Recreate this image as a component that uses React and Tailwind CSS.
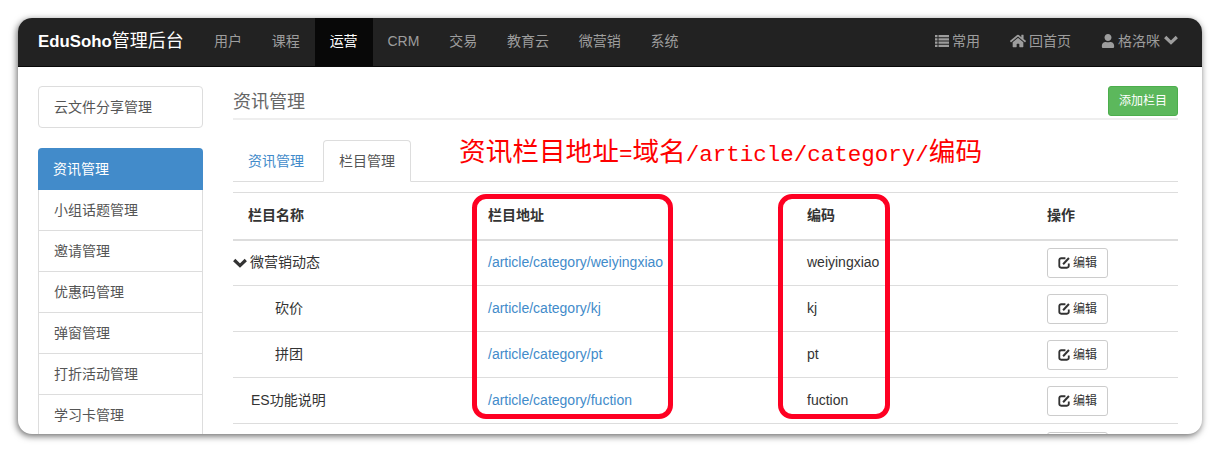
import { FaHome, FaUser } from 'react-icons/fa';

const topLinks = ['用户', '课程', '运营', 'CRM', '交易', '教育云', '微营销', '系统'];
const sideLinks = ['小组话题管理', '邀请管理', '优惠码管理', '弹窗管理', '打折活动管理', '学习卡管理'];
const rows = [
  { name: '微营销动态', path: 'weiyingxiao', code: 'weiyingxiao', open: true },
  { name: '砍价', path: 'kj', code: 'kj', child: true },
  { name: '拼团', path: 'pt', code: 'pt', child: true },
  { name: 'ES功能说明', path: 'fuction', code: 'fuction' },
];

function Chevron({ className }) {
  return (
    <svg viewBox="0 0 14 10" className={className} fill="none" stroke="currentColor" strokeWidth="3.2">
      <path d="M1.2 2 L7 7.6 L12.8 2" />
    </svg>
  );
}

function ListIcon() {
  return (
    <svg viewBox="0 0 14 12" className="w-[14px] h-[12px]" fill="currentColor">
      <path d="M0 0h2.5v2.2H0zM3.5 0H14v2.2H3.5zM0 3.3h2.5v2.2H0zM3.5 3.3H14v2.2H3.5zM0 6.6h2.5v2.2H0zM3.5 6.6H14v2.2H3.5zM0 9.8h2.5V12H0zM3.5 9.8H14V12H3.5z" />
    </svg>
  );
}

function EditIcon() {
  return (
    <svg viewBox="0 0 14 14" className="w-[13px] h-[13px] mr-[2px]" fill="none" stroke="currentColor">
      <path d="M8 2.4H3.4A2 2 0 0 0 1.4 4.4v6.2a2 2 0 0 0 2 2h6.2a2 2 0 0 0 2-2V8" strokeWidth="2" />
      <path d="M5.5 8.8 L11.8 2.2" strokeWidth="2.2" />
    </svg>
  );
}

function EditButton() {
  return (
    <button className="flex items-center justify-center w-[61px] h-[30px] border border-[#ccc] rounded-[3px] bg-white text-[12px] text-[#333]">
      <EditIcon />
      编辑
    </button>
  );
}

export default function App() {
  return (
    <div className="w-[1220px] h-[452px] bg-white pt-[18px] px-[18px] font-['Liberation_Sans','Noto_Sans_CJK_SC',sans-serif] text-[14px] text-[#333] overflow-hidden">
      <div className="relative w-[1184px] h-[416px] rounded-[14px] overflow-hidden bg-white shadow-[-1px_2px_7px_rgba(0,0,0,0.6)]">
        <nav className="flex items-center h-[49px] bg-[#222] border-b border-b-[#080808] text-[#9d9d9d]">
          <div className="pl-[20px] pb-[2px] text-[16.8px] font-bold text-white w-[181px] whitespace-nowrap">
            EduSoho<span className="font-normal text-[18px]">管理后台</span>
          </div>
          {topLinks.map((link) => (
            <a
              key={link}
              className={`flex items-center h-full px-[15px] pb-[2px] -mr-[0.2px] ${link === '运营' ? 'bg-[#080808] text-white' : ''}`}
            >
              {link}
            </a>
          ))}
          <div className="ml-auto flex items-center pr-[24px] pb-[2px] gap-[30px]">
            <span className="flex items-center gap-[3px]"><ListIcon />常用</span>
            <span className="flex items-center gap-[3px]"><FaHome className="text-[16px]" />回首页</span>
            <span className="flex items-center gap-[3px]"><FaUser className="text-[14px]" />格洛咪<Chevron className="w-[14px] h-[10px] ml-[1px] mb-[2px]" /></span>
          </div>
        </nav>

        <div className="flex px-[20px] pt-[19px] gap-[30px]">
          <aside className="w-[165px] shrink-0">
            <div className="h-[42px] flex items-center px-[15px] border border-[#ddd] rounded-[4px] text-[#555]">云文件分享管理</div>
            <div className="mt-[20px]">
              <div className="h-[42px] flex items-center px-[15px] bg-[#428bca] text-white rounded-t-[4px]">资讯管理</div>
              {sideLinks.map((link) => (
                <div key={link} className="h-[41px] flex items-center px-[15px] border border-t-0 border-[#ddd] text-[#555]">{link}</div>
              ))}
            </div>
          </aside>

          <main className="w-[945px]">
            <div className="flex justify-between h-[34px] border-b-2 border-[#eee]">
              <h1 className="text-[18px] leading-[33px] text-[#666]">资讯管理</h1>
              <button className="w-[70px] h-[30px] bg-[#5cb85c] border border-[#4cae4c] rounded-[3px] text-white text-[12px]">添加栏目</button>
            </div>

            <div className="flex mt-[20px] h-[42px] border-b border-[#ddd]">
              <a className="h-[41px] flex items-center px-[15px] pt-[2px] mr-[4px] text-[#428bca]">资讯管理</a>
              <a className="h-[42px] flex items-center px-[15px] border border-[#ddd] border-b-white rounded-t-[4px] bg-white text-[#555]">栏目管理</a>
            </div>

            <table className="w-full mt-[10px] table-fixed border-t border-[#ddd]">
              <thead>
                <tr className="h-[47px] border-b-2 border-[#ddd] text-left">
                  <th className="w-[240px] pl-[15px] font-bold">栏目名称</th>
                  <th className="w-[319px] pl-[15px] font-bold">栏目地址</th>
                  <th className="w-[240px] pl-[15px] font-bold">编码</th>
                  <th className="pl-[15px] font-bold">操作</th>
                </tr>
              </thead>
              <tbody>
                {rows.map((row) => (
                  <tr key={row.name} className="h-[46px] border-b border-[#ddd]">
                    <td className={row.child ? 'pl-[42px]' : row.open ? 'pl-0' : 'pl-[18px]'}>
                      {row.open && <Chevron className="inline-block w-[14px] h-[10px] mr-[3px] mb-[2px]" />}
                      {row.name}
                    </td>
                    <td className="pl-[15px] text-[#428bca]">/article/category/{row.path}</td>
                    <td className="pl-[15px]">{row.code}</td>
                    <td className="pl-[15px]"><EditButton /></td>
                  </tr>
                ))}
              </tbody>
            </table>
            <div className="mt-[8px] ml-[814px] w-[61px] h-[30px] border border-[#ccc] rounded-[3px]" />
          </main>
        </div>

        <div className="absolute left-[441px] top-[116px] text-[26.67px] leading-[36px] text-[#fe0000] whitespace-nowrap">
          资讯栏目地址<span className="text-[22.5px] font-['Liberation_Mono',monospace]">=</span>域名<span className="text-[22.5px] font-['Liberation_Mono',monospace]">/article/category/</span>编码
        </div>
        <div className="absolute left-[454px] top-[176px] w-[201px] h-[225px] border-[5px] border-[#fe0022] rounded-[14px]" />
        <div className="absolute left-[760px] top-[176px] w-[112px] h-[225px] border-[5px] border-[#fe0022] rounded-[14px]" />
      </div>
    </div>
  );
}
